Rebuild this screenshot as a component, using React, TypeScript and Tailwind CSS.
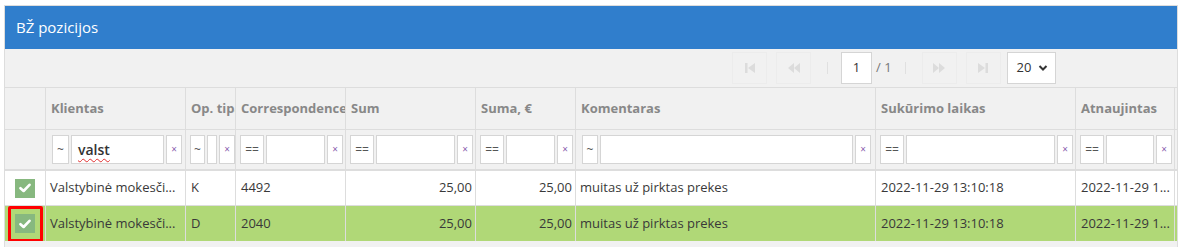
import React from "react";

const font = { fontFamily: '"Open Sans", "Noto Sans", sans-serif' };

function OpBox({ label, w }: { label: string; w: string }) {
  return (
    <div className={`${w} h-[29px] shrink-0 bg-white border border-[#d5d5d5] flex items-center justify-center text-[12px] text-[#555]`}>
      {label}
    </div>
  );
}

function XBox() {
  return (
    <div className="w-[16px] h-[29px] shrink-0 bg-white border border-[#d5d5d5] flex items-center justify-center text-[10px] text-[#8a5fb0]">
      ×
    </div>
  );
}

function Filter({ op, opW, inputW, value }: { op: string; opW: string; inputW: string; value?: string }) {
  return (
    <div className="flex items-center gap-[2px] overflow-hidden">
      <OpBox label={op} w={opW} />
      <div className={`${inputW} h-[29px] shrink-0 bg-white border border-[#d5d5d5] flex items-center px-[6px] text-[14px] font-semibold text-[#333]`}>
        {value ? <span className="underline decoration-wavy decoration-[#e03030] decoration-1 underline-offset-[3px]">{value}</span> : null}
      </div>
      <XBox />
    </div>
  );
}

function Check() {
  return (
    <div className="w-[20px] h-[19px] bg-[#87b87f] flex items-center justify-center">
      <svg width="12" height="10" viewBox="0 0 12 10">
        <path d="M1.5 5.2 L4.6 8 L10.5 1.8" fill="none" stroke="white" strokeWidth="2.6" strokeLinecap="round" strokeLinejoin="round" />
      </svg>
    </div>
  );
}

const cols = "grid grid-cols-[41px_140px_50px_110px_130px_100px_300px_200px_99px]";

function PagerBtn({ children }: { children: React.ReactNode }) {
  return (
    <div className="w-[35px] h-[32px] border border-[#ececec] flex items-center justify-center">
      {children}
    </div>
  );
}

export default function App() {
  const cell = "border-r border-[#dddddd] overflow-hidden whitespace-nowrap";
  const rows = [
    { sel: false, k: "Valstybinė mokesči...", op: "K", c: "4492" },
    { sel: true, k: "Valstybinė mokesči...", op: "D", c: "2040" },
  ];
  return (
    <div className="w-[1179px] h-[247px] bg-white pt-[5px] pl-[4px] overflow-hidden" style={font}>
      <div className="w-[1174px] border border-[#dddddd] bg-[#f1f1f1]">
        <div className="h-[43px] bg-[#307ecc] flex items-center pl-[11px] text-white text-[15px]">BŽ pozicijos</div>
        <div className="h-[39px] flex items-center border-b border-[#dddddd]">
          <div className="ml-[727px] flex items-center">
            <PagerBtn>
              <svg width="12" height="12" viewBox="0 0 12 12" fill="#dcdcdc"><rect x="1" y="1" width="2.5" height="10" /><path d="M11 1 L4 6 L11 11 Z" /></svg>
            </PagerBtn>
            <div className="w-[9px]" />
            <PagerBtn>
              <svg width="14" height="12" viewBox="0 0 14 12" fill="#dcdcdc"><path d="M7 1 L1 6 L7 11 Z" /><path d="M13 1 L7 6 L13 11 Z" /></svg>
            </PagerBtn>
            <div className="w-[1px] h-[12px] bg-[#e0e0e0] ml-[16px]" />
            <div className="ml-[13px] w-[31px] h-[32px] bg-white border border-[#d5d5d5] flex items-center justify-center text-[13px] text-[#333]">1</div>
            <span className="ml-[4px] text-[13px] text-[#777]">/ 1</span>
            <div className="w-[1px] h-[12px] bg-[#e0e0e0] ml-[13px]" />
            <div className="w-[16px]" />
            <PagerBtn>
              <svg width="14" height="12" viewBox="0 0 14 12" fill="#dcdcdc"><path d="M1 1 L7 6 L1 11 Z" /><path d="M7 1 L13 6 L7 11 Z" /></svg>
            </PagerBtn>
            <div className="w-[9px]" />
            <PagerBtn>
              <svg width="12" height="12" viewBox="0 0 12 12" fill="#dcdcdc"><path d="M1 1 L8 6 L1 11 Z" /><rect x="8.5" y="1" width="2.5" height="10" /></svg>
            </PagerBtn>
            <div className="ml-[6px] w-[49px] h-[32px] bg-white border border-[#d5d5d5] flex items-center pl-[9px] gap-[7px] text-[13px] text-[#333]">
              <span>20</span>
              <svg width="10" height="8" viewBox="0 0 10 8"><path d="M1.5 2 L5 5.5 L8.5 2" fill="none" stroke="#333" strokeWidth="2" /></svg>
            </div>
          </div>
        </div>
        <div className={`${cols} h-[42px] border-b border-[#dddddd] text-[13px] font-bold text-[#888]`}>
          <div className={cell} />
          {["Klientas", "Op. tipas", "Correspondence", "Sum", "Suma, €", "Komentaras", "Sukūrimo laikas", "Atnaujintas"].map((h) => (
            <div key={h} className={`${cell} flex items-center pl-[5px]`}>{h}</div>
          ))}
        </div>
        <div className={`${cols} h-[41px] border-b-2 border-[#dddddd]`}>
          <div className={cell} />
          <div className={`${cell} flex items-center pl-[6px]`}><Filter op="~" opW="w-[17px]" inputW="w-[93px]" value="valst" /></div>
          <div className={`${cell} flex items-center pl-[4px]`}>
            <div className="flex items-center gap-[2px]">
              <OpBox label="~" w="w-[15px]" />
              <div className="w-[10px] h-[29px] shrink-0 bg-white border border-[#d5d5d5]" />
              <XBox />
            </div>
          </div>
          <div className={`${cell} flex items-center pl-[4px]`}><Filter op="==" opW="w-[24px]" inputW="w-[59px]" /></div>
          <div className={`${cell} flex items-center pl-[4px]`}><Filter op="==" opW="w-[24px]" inputW="w-[79px]" /></div>
          <div className={`${cell} flex items-center pl-[4px]`}><Filter op="==" opW="w-[24px]" inputW="w-[49px]" /></div>
          <div className={`${cell} flex items-center pl-[6px]`}><Filter op="~" opW="w-[16px]" inputW="w-[253px]" /></div>
          <div className={`${cell} flex items-center pl-[4px]`}><Filter op="==" opW="w-[24px]" inputW="w-[149px]" /></div>
          <div className={`${cell} flex items-center pl-[4px]`}><Filter op="==" opW="w-[24px]" inputW="w-[48px]" /></div>
        </div>
        {rows.map((r, i) => (
          <div key={i} className={`${cols} h-[35px] text-[13px] text-[#393939] ${r.sel ? "bg-[#b0d877]" : "bg-white"} ${i === 0 ? "border-b border-[#dddddd]" : ""}`}>
            <div className={`${cell} relative flex items-center justify-center ${r.sel ? "" : ""}`}>
              <Check />
              {r.sel ? <div className="absolute left-[3px] top-[0px] w-[35px] h-[36px] border-[3px] border-[#ff0000] rounded-[2px]" /> : null}
            </div>
            <div className={`${cell} flex items-center pl-[4px]`}>{r.k}</div>
            <div className={`${cell} flex items-center pl-[5px]`}>{r.op}</div>
            <div className={`${cell} flex items-center pl-[5px]`}>{r.c}</div>
            <div className={`${cell} flex items-center justify-end pr-[3px]`}>25,00</div>
            <div className={`${cell} flex items-center justify-end pr-[3px]`}>25,00</div>
            <div className={`${cell} flex items-center pl-[4px]`}>muitas už pirktas prekes</div>
            <div className={`${cell} flex items-center pl-[5px]`}>2022-11-29 13:10:18</div>
            <div className={`${cell} flex items-center pl-[5px]`}>2022-11-29 1...</div>
          </div>
        ))}
        <div className="h-[10px]" />
      </div>
    </div>
  );
}
